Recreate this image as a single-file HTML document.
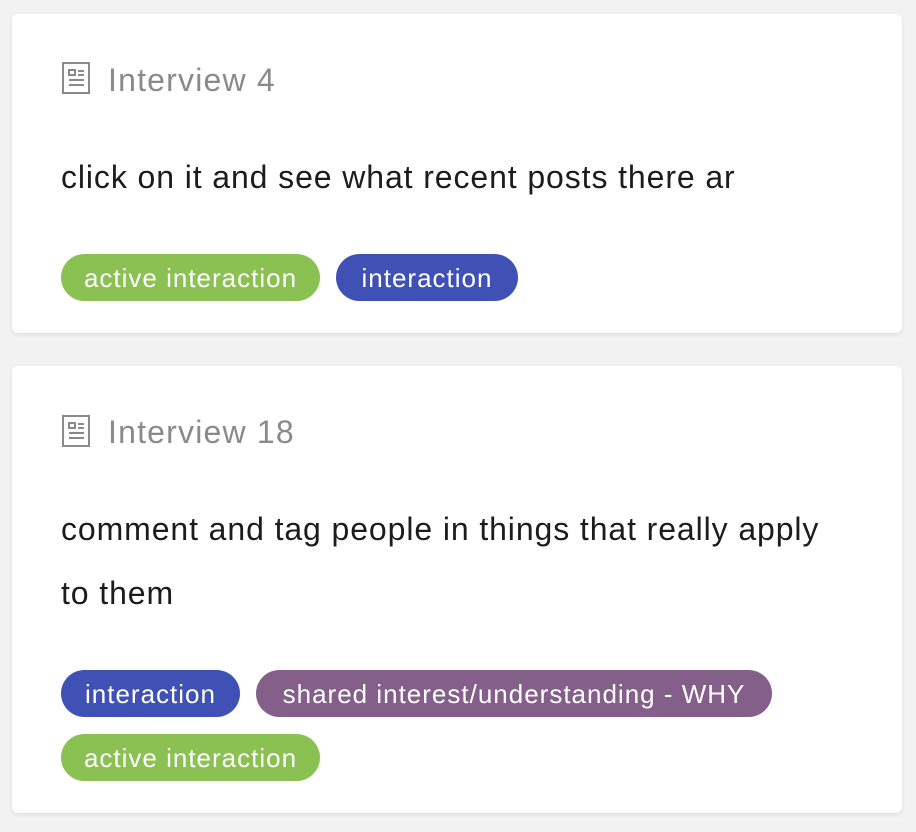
<!DOCTYPE html>
<html><head><style>
body{margin:0;width:916px;height:832px;background:#f2f2f2;font-family:"Liberation Sans",sans-serif;position:relative;overflow:hidden}
.card{position:absolute;left:12px;width:890px;background:#fff;border-radius:6px;box-shadow:0 2px 4px rgba(0,0,0,0.08)}
.ab{position:absolute}
.title{font-size:32px;color:#8a8a8a;left:108px;line-height:36px;letter-spacing:1.2px}
.body{font-size:32px;color:#1c1c1c;left:61px;line-height:64px;white-space:nowrap;letter-spacing:0.9px}
.tag{position:absolute;height:47px;border-radius:24px;color:#fff;font-size:26px;line-height:49px;text-align:center;white-space:nowrap;letter-spacing:1px}
.g{background:#8bc152}.b{background:#3f51b5}.p{background:#835f8a}
</style></head><body>
<div class="card" style="top:14px;height:319px"></div>
<div class="card" style="top:366px;height:447px"></div>

<svg class="ab" style="left:62px;top:62px" width="28" height="32" viewBox="0 0 28 32" fill="none" stroke="#8a8a8a" stroke-width="2"><rect x="1" y="1" width="26" height="30"/><rect x="7" y="8" width="6" height="5"/><path d="M16 9h6M16 13h6M7 18h15M7 23h15"/></svg>
<div class="ab title" style="top:62px">Interview 4</div>
<div class="ab body" style="top:145px">click on it and see what recent posts there ar</div>
<div class="tag g" style="left:61px;top:254px;width:259px">active interaction</div>
<div class="tag b" style="left:336px;top:254px;width:182px">interaction</div>

<svg class="ab" style="left:62px;top:415px" width="28" height="32" viewBox="0 0 28 32" fill="none" stroke="#8a8a8a" stroke-width="2"><rect x="1" y="1" width="26" height="30"/><rect x="7" y="8" width="6" height="5"/><path d="M16 9h6M16 13h6M7 18h15M7 23h15"/></svg>
<div class="ab title" style="top:414px">Interview 18</div>
<div class="ab body" style="top:497px">comment and tag people in things that really apply<br>to them</div>
<div class="tag b" style="left:61px;top:670px;width:179px">interaction</div>
<div class="tag p" style="left:256px;top:670px;width:516px">shared interest/understanding - WHY</div>
<div class="tag g" style="left:61px;top:734px;width:259px">active interaction</div>
</body></html>
